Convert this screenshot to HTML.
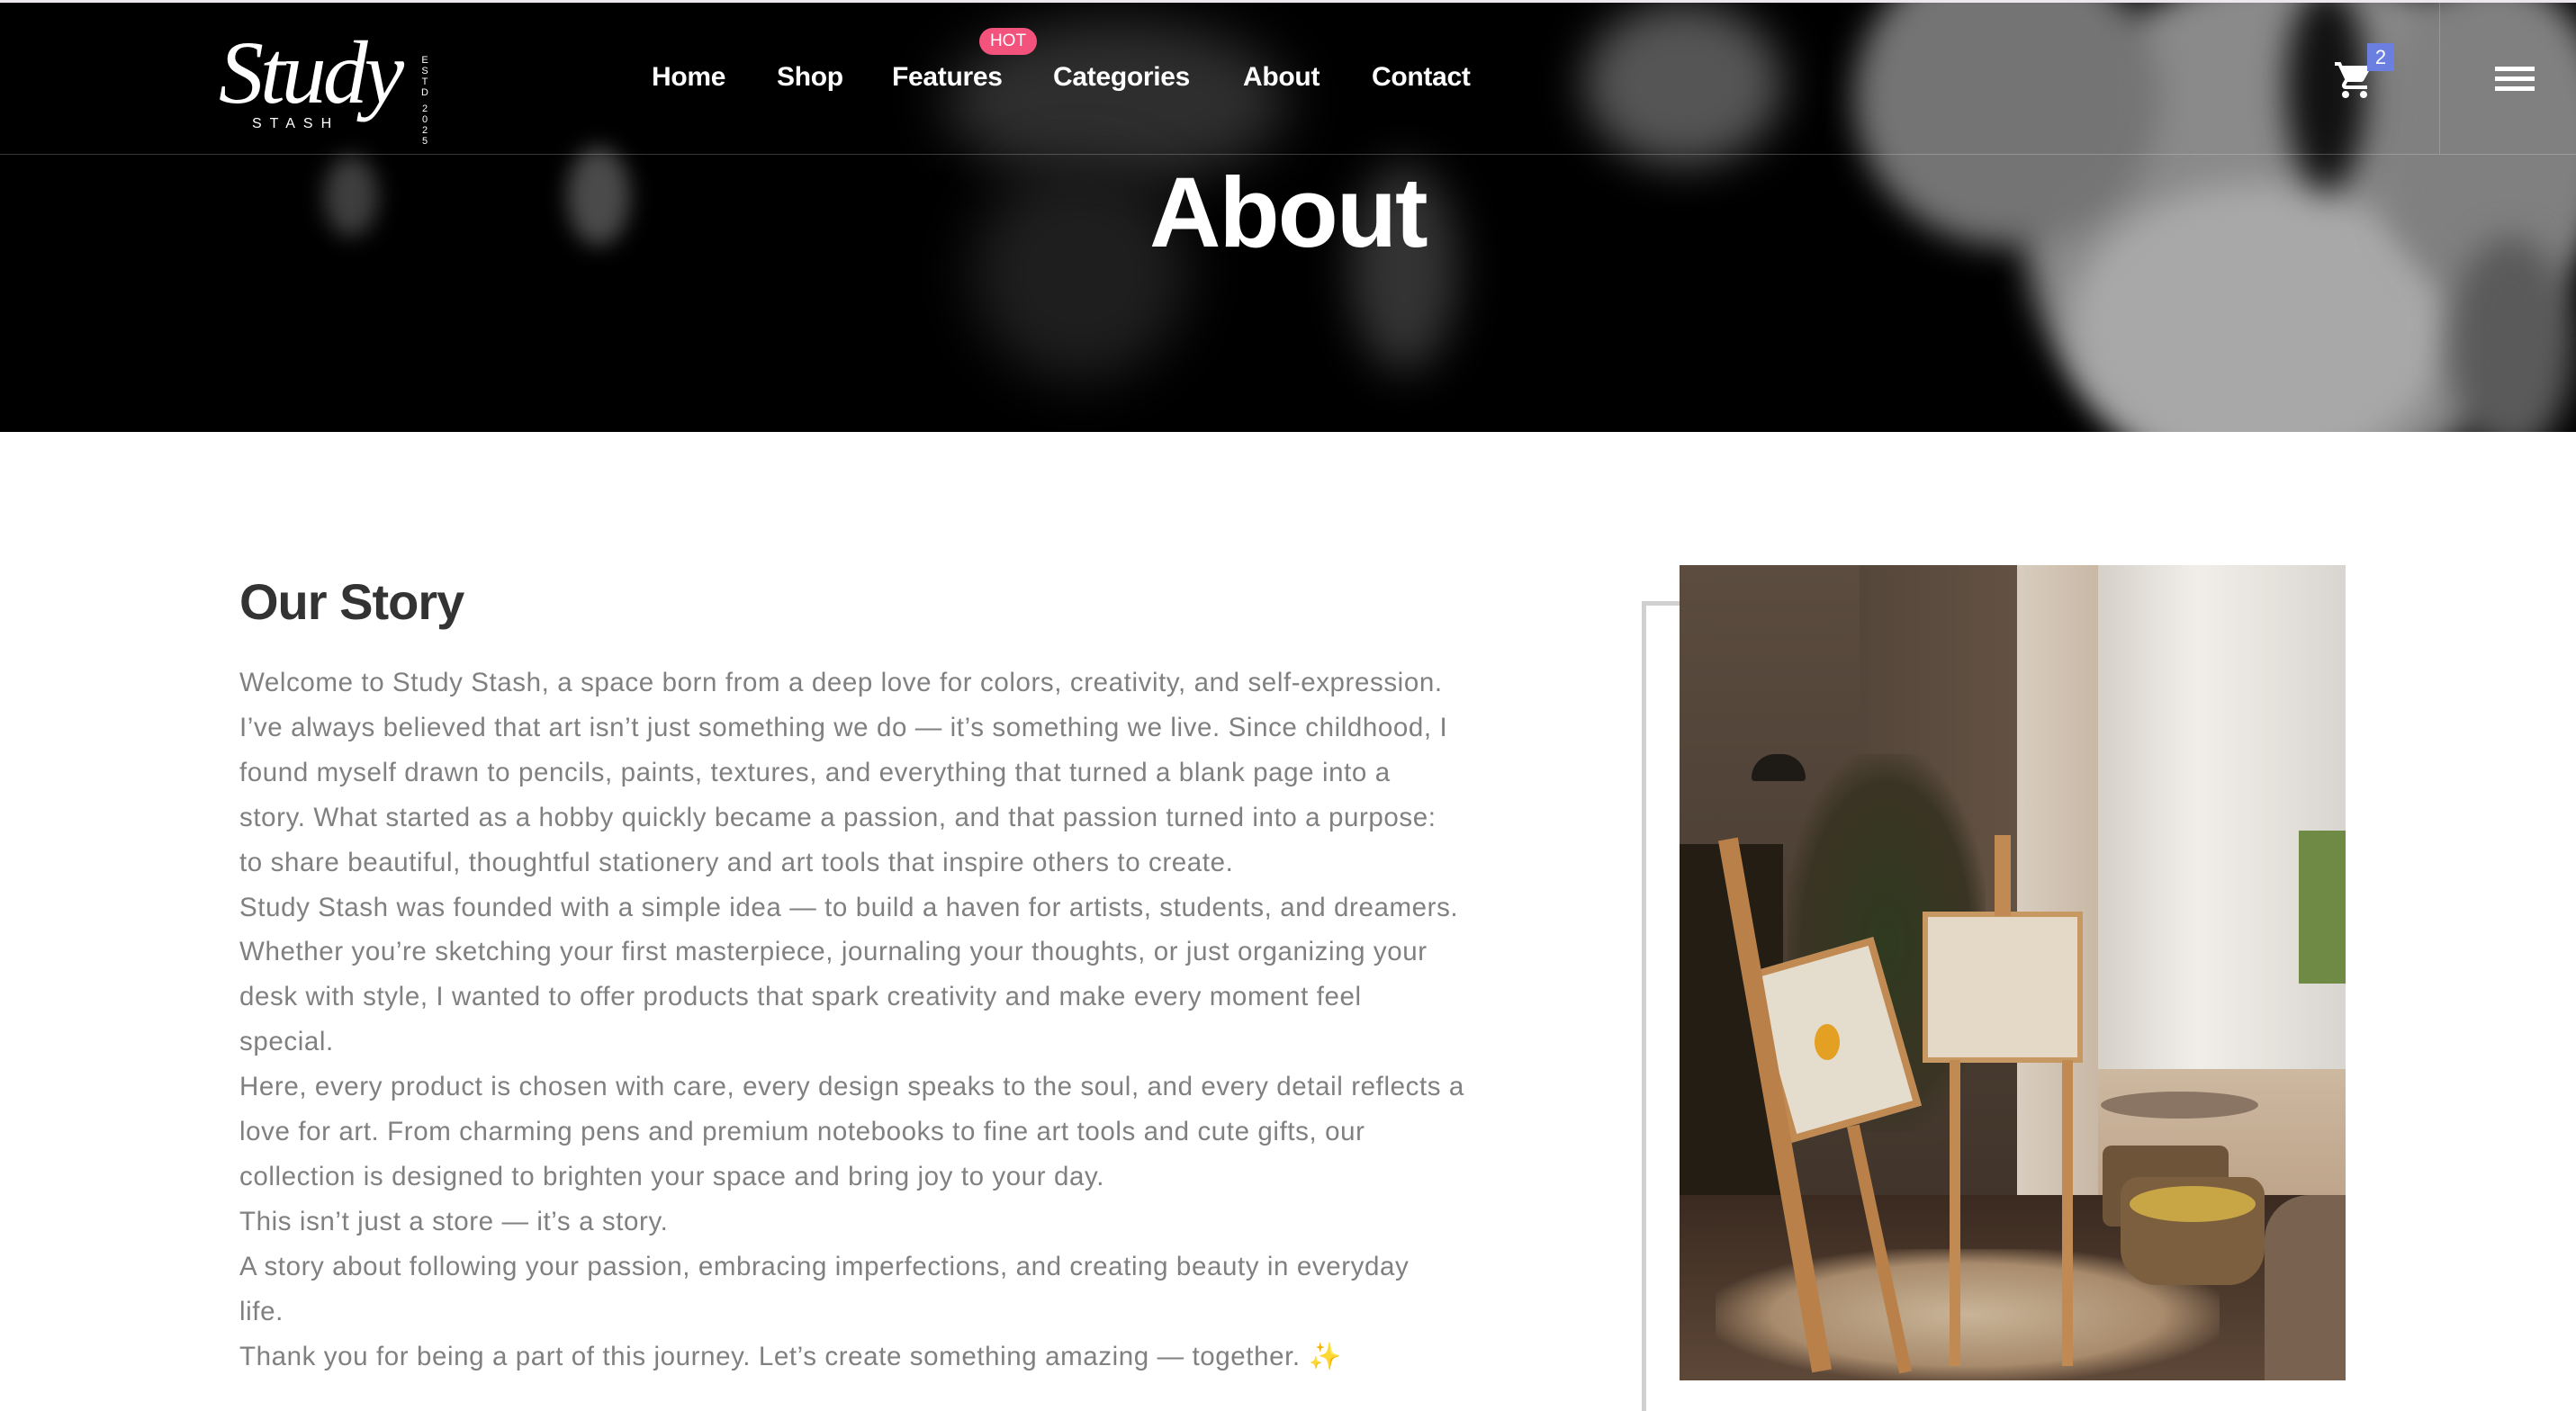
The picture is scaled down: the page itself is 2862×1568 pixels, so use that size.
<!DOCTYPE html>
<html><head><meta charset="utf-8">
<style>
*{margin:0;padding:0;box-sizing:border-box}
html,body{width:2862px;height:1534px;overflow:hidden;background:#fff;font-family:"Liberation Sans",sans-serif}
.hero{position:absolute;left:0;top:0;width:2862px;height:480px;background:#000;overflow:hidden;border-top:3px solid #ece8ee}
.blob{position:absolute;border-radius:50%;filter:blur(18px)}
.hdrline{position:absolute;left:0;top:168px;width:2862px;height:1px;background:rgba(255,255,255,.22)}
.vline{position:absolute;left:2710px;top:0;width:1px;height:168px;background:rgba(255,255,255,.2)}
.nav{position:absolute;top:66px;color:#fff;font-size:30px;font-weight:bold;letter-spacing:-0.3px}
.hot{position:absolute;left:1088px;top:28px;width:64px;height:30px;border-radius:15px;background:#f2527b;color:#fff;font-size:19px;text-align:center;line-height:30px}
h1{position:absolute;left:1277px;top:170px;color:#fff;font-size:110px;font-weight:bold;letter-spacing:-2px}
h2{position:absolute;left:266px;top:636px;color:#333;font-size:56px;font-weight:bold;letter-spacing:-1px}
.txt{position:absolute;left:266px;top:734px;color:#808080;font-size:29.5px;line-height:49.9px;letter-spacing:0.6px;white-space:nowrap}
.frame{position:absolute;left:1824px;top:668px;width:44px;height:900px;border-left:5px solid #d0d0d0;border-top:5px solid #d0d0d0}
.img{position:absolute;left:1866px;top:628px;width:740px;height:906px;overflow:hidden;background:#4a3d33}
.img div{position:absolute}
.est{position:absolute;color:#fff;font-size:11px;line-height:12px;width:12px;text-align:center}
</style></head><body>
<div class="hero">
  <div class="blob" style="left:2250px;top:-40px;width:600px;height:580px;background:#8a8a8a"></div>
  <div class="blob" style="left:2060px;top:-60px;width:340px;height:330px;background:#747474"></div>
  <div class="blob" style="left:2300px;top:200px;width:420px;height:320px;background:#a8a8a8"></div>
  <div class="blob" style="left:2640px;top:-30px;width:260px;height:360px;background:#808080"></div>
  <div class="blob" style="left:2540px;top:-20px;width:90px;height:230px;background:#111"></div>
  <div class="blob" style="left:2720px;top:260px;width:140px;height:240px;background:#5a5a5a"></div>
  <div class="blob" style="left:1050px;top:20px;width:380px;height:180px;background:#2e2e2e;filter:blur(30px)"></div>
  <div class="blob" style="left:1080px;top:180px;width:240px;height:240px;background:#1e1e1e;filter:blur(30px)"></div>
  <div class="blob" style="left:1500px;top:180px;width:120px;height:230px;background:#333;filter:blur(24px)"></div>
  <div class="blob" style="left:1760px;top:0px;width:220px;height:180px;background:#555;filter:blur(24px)"></div>
  <div class="blob" style="left:360px;top:170px;width:60px;height:90px;background:#3e3e3e;filter:blur(12px)"></div>
  <div class="blob" style="left:630px;top:160px;width:70px;height:110px;background:#4a4a4a;filter:blur(12px)"></div>
  <div class="hdrline"></div>
  <div class="vline"></div>
  <div style="position:absolute;left:243px;top:20px;color:#fff;font-family:'Liberation Serif',serif;font-style:italic;font-size:100px;letter-spacing:-4px">Study</div>
  <div style="position:absolute;left:280px;top:126px;color:#fff;font-size:16px;letter-spacing:9px">STASH</div>
  <div class="est" style="left:466px;top:58px">E<br>S<br>T<br>D</div>
  <div class="est" style="left:466px;top:112px">2<br>0<br>2<br>5</div>
  <div class="nav" style="left:724px">Home</div>
  <div class="nav" style="left:863px">Shop</div>
  <div class="nav" style="left:991px">Features</div>
  <div class="nav" style="left:1170px">Categories</div>
  <div class="nav" style="left:1381px">About</div>
  <div class="nav" style="left:1524px">Contact</div>
  <div class="hot">HOT</div>
  <svg style="position:absolute;left:2592px;top:62px" width="48" height="48" viewBox="0 0 24 24"><path fill="#fff" d="M7 18c-1.1 0-2 .9-2 2s.9 2 2 2 2-.9 2-2-.9-2-2-2zM1 2v2h2l3.6 7.6-1.4 2.4c-.1.3-.2.6-.2 1 0 1.1.9 2 2 2h12v-2H7.4c-.1 0-.2-.1-.2-.2v-.1l.9-1.7h7.4c.8 0 1.4-.4 1.7-1l3.6-6.5c.1-.2.2-.3.2-.5 0-.6-.4-1-1-1H5.2l-.9-2H1zm16 16c-1.1 0-2 .9-2 2s.9 2 2 2 2-.9 2-2-.9-2-2-2z"/></svg>
  <div style="position:absolute;left:2630px;top:45px;width:30px;height:31px;background:#6b7fe0;color:#fff;font-size:22px;text-align:center;line-height:31px">2</div>
  <div style="position:absolute;left:2772px;top:71px;width:44px;height:5px;background:#fff"></div>
  <div style="position:absolute;left:2772px;top:82px;width:44px;height:5px;background:#fff"></div>
  <div style="position:absolute;left:2772px;top:93px;width:44px;height:5px;background:#fff"></div>
  <h1>About</h1>
</div>

<h2>Our Story</h2>
<div class="txt">Welcome to Study Stash, a space born from a deep love for colors, creativity, and self-expression.<br>I’ve always believed that art isn’t just something we do — it’s something we live. Since childhood, I<br>found myself drawn to pencils, paints, textures, and everything that turned a blank page into a<br>story. What started as a hobby quickly became a passion, and that passion turned into a purpose:<br>to share beautiful, thoughtful stationery and art tools that inspire others to create.<br>Study Stash was founded with a simple idea — to build a haven for artists, students, and dreamers.<br>Whether you’re sketching your first masterpiece, journaling your thoughts, or just organizing your<br>desk with style, I wanted to offer products that spark creativity and make every moment feel<br>special.<br>Here, every product is chosen with care, every design speaks to the soul, and every detail reflects a<br>love for art. From charming pens and premium notebooks to fine art tools and cute gifts, our<br>collection is designed to brighten your space and bring joy to your day.<br>This isn’t just a store — it’s a story.<br>A story about following your passion, embracing imperfections, and creating beauty in everyday<br>life.<br>Thank you for being a part of this journey. Let’s create something amazing — together. <span style="color:#e8c640">✨</span></div>

<div class="frame"></div>
<div class="img">
  <div style="left:0;top:0;width:375px;height:906px;background:linear-gradient(180deg,#5b4c3f 0%,#4a3d32 50%,#3a2e25 100%)"></div>
  <div style="left:200px;top:0;width:175px;height:500px;background:linear-gradient(90deg,#54463a,#635244)"></div>
  <div style="left:375px;top:0;width:90px;height:906px;background:linear-gradient(90deg,#d8cdc0,#c9b8a5)"></div>
  <div style="left:465px;top:0;width:275px;height:600px;background:linear-gradient(90deg,#d5d0c8,#f1eeea 40%,#e6e2dc 70%,#d8d5d0)"></div>
  <div style="left:465px;top:560px;width:275px;height:346px;background:linear-gradient(180deg,#cdb8a0,#a8896c)"></div>
  <div style="left:688px;top:295px;width:52px;height:170px;background:#6f8a45"></div>
  <div style="left:0;top:310px;width:115px;height:390px;background:#231d14"></div>
  <div style="left:120px;top:210px;width:220px;height:420px;background:radial-gradient(ellipse at center,#2f3a1f 0%,#3a3424 60%,rgba(74,61,50,0) 75%)"></div>
  <div style="left:80px;top:210px;width:60px;height:30px;background:#1e1a16;border-radius:30px 30px 4px 4px"></div>
  <div style="left:0;top:700px;width:740px;height:206px;background:linear-gradient(180deg,#3a2a20,#5e4838)"></div>
  <div style="left:40px;top:760px;width:560px;height:146px;background:radial-gradient(ellipse at center,#c9b497 0%,#a88b6c 55%,rgba(94,72,56,0) 75%)"></div>
  <div style="left:95px;top:430px;width:150px;height:195px;background:#e4dccd;transform:rotate(-16deg);border:8px solid #c08a52"></div>
  <div style="left:150px;top:510px;width:28px;height:40px;background:#e3a022;border-radius:50%"></div>
  <div style="left:95px;top:300px;width:22px;height:600px;background:#b98149;transform:rotate(-10deg)"></div>
  <div style="left:215px;top:620px;width:14px;height:280px;background:#b98149;transform:rotate(-12deg)"></div>
  <div style="left:270px;top:385px;width:178px;height:168px;background:#e3d9c6;border:6px solid #c79862"></div>
  <div style="left:300px;top:550px;width:12px;height:340px;background:#c08a52"></div>
  <div style="left:425px;top:550px;width:12px;height:340px;background:#c08a52"></div>
  <div style="left:350px;top:300px;width:18px;height:90px;background:#c08a52"></div>
  <div style="left:468px;top:585px;width:175px;height:30px;background:#8a7565;border-radius:50%"></div>
  <div style="left:470px;top:645px;width:140px;height:90px;background:#6e5438;border-radius:10px"></div>
  <div style="left:490px;top:680px;width:160px;height:120px;background:#7c5f3e;border-radius:20px 20px 40px 40px"></div>
  <div style="left:500px;top:690px;width:140px;height:40px;background:#c8a645;border-radius:50%"></div>
  <div style="left:650px;top:700px;width:90px;height:206px;background:#7a6250;border-radius:50px 0 0 0"></div>
</div>
</body></html>
